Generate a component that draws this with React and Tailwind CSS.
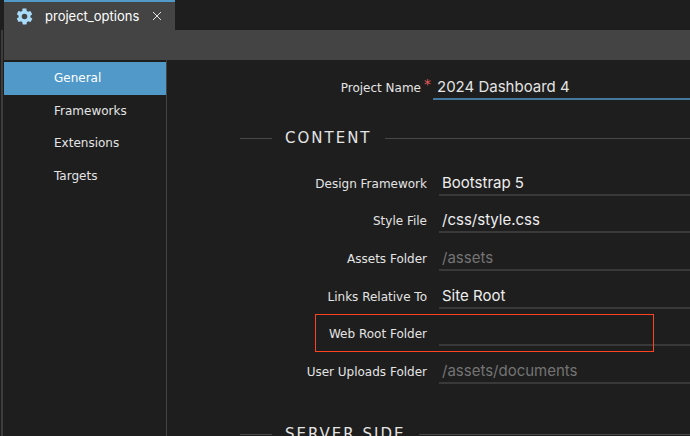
const NAV = ["General", "Frameworks", "Extensions", "Targets"];

const FIELDS = [
  { id: "framework", label: "Design Framework", value: "Bootstrap 5", kind: "select" },
  { id: "style", label: "Style File", value: "/css/style.css" },
  { id: "assets", label: "Assets Folder", placeholder: "/assets" },
  { id: "links", label: "Links Relative To", value: "Site Root", kind: "select" },
  { id: "webroot", label: "Web Root Folder", highlight: true },
  { id: "uploads", label: "User Uploads Folder", placeholder: "/assets/documents" },
];

const CONTROL =
  "block h-7 w-full appearance-none border-0 border-b-2 border-[#393939] bg-transparent px-[3px] font-['Inter',sans-serif] text-[15px] text-[#eeeeee] outline-none placeholder:text-[#747474]";

function Gear() {
  return (
    <svg viewBox="0 0 24 24" className="size-[19px] shrink-0 fill-[#a9dbfb]" aria-hidden="true">
      <path d="M19.4 13c.1-.3.1-.7.1-1s0-.7-.1-1l2.1-1.6c.2-.2.3-.4.1-.7l-2-3.4c-.1-.3-.4-.3-.6-.3l-2.500 1c-.5-.4-1.100-.7-1.700-1l-.4-2.600c0-.2-.2-.4-.5-.4h-4c-.2 0-.4.2-.5.4L9.200 5c-.6.2-1.200.6-1.700 1L5 5c-.2-.1-.5 0-.6.2l-2 3.500c-.1.200-.1.500.1.600L4.600 11c0 .3-.1.700-.1 1s0 .7.100 1l-2.100 1.600c-.2.200-.3.400-.1.700l2 3.400c.1.300.4.300.6.300l2.500-1c.5.400 1.100.700 1.700 1l.4 2.600c0 .200.200.400.5.400h4c.2 0 .4-.2.500-.4l.4-2.600c.6-.3 1.200-.6 1.700-1l2.500 1c.2.100.5 0 .6-.3l2-3.400c.1-.2.100-.5-.1-.7L19.400 13zM12 15.500a3.500 3.500 0 1 1 0-7 3.500 3.500 0 0 1 0 7z" />
    </svg>
  );
}

function SectionTitle({ children }) {
  return (
    <div className="flex items-center gap-[13px]">
      <span className="h-px w-8 bg-[#484848]" />
      <h2 className="text-[15px] leading-5 tracking-[2px] text-[#e4e4e4]">{children}</h2>
      <span className="h-px flex-1 bg-[#484848]" />
    </div>
  );
}

function Field({ field }) {
  return (
    <div className="relative flex items-end">
      <label htmlFor={field.id} className="w-[187px] pb-[2px] text-right text-[12px] leading-5">
        {field.label}
      </label>
      <div className="flex-1 pl-3">
        {field.kind === "select" ? (
          <select id={field.id} className={`${CONTROL} pt-1`}>
            <option>{field.value}</option>
          </select>
        ) : (
          <input id={field.id} className={`${CONTROL} pt-[2px]`} defaultValue={field.value} placeholder={field.placeholder} />
        )}
      </div>
      {field.highlight && (
        <div className="pointer-events-none absolute top-[5px] right-9 -bottom-[6px] left-[75px] border border-solid border-[#ff4422]" />
      )}
    </div>
  );
}

export default function App() {
  return (
    <div className="flex h-screen overflow-hidden bg-[#1e1e1e] font-['DejaVu_Sans',Verdana,sans-serif] text-[#e4e4e4]">
      <div className="w-1 shrink-0 pt-[30px]">
        <div className="ml-px h-full w-[2px] bg-[#3c3c3c]" />
      </div>
      <div className="flex min-w-0 flex-1 flex-col">
        <header>
          <div className="flex h-[30px]">
            <div className="flex w-[171px] items-center border-t-2 border-[#5099c9] bg-[#444444] pl-[11px]">
              <Gear />
              <span className="ml-[11px] font-['Inter',sans-serif] text-[13px] leading-5 text-white">project_options</span>
              <button aria-label="Close tab" className="ml-[13px]">
                <svg viewBox="0 0 10 10" className="size-[10px] stroke-[#e4e4e4]" aria-hidden="true">
                  <path d="M1 1l8 8M9 1l-8 8" />
                </svg>
              </button>
            </div>
          </div>
          <div className="h-[30px] bg-[#444444]" />
        </header>
        <div className="flex min-h-0 flex-1">
          <nav className="w-[163px] shrink-0 border-r border-[#444444] pt-[2px]">
            <ul className="grid h-[130px] grid-rows-4">
              {NAV.map((item) => (
                <li key={item} className="grid">
                  <a
                    href="#"
                    className={
                      item === "General"
                        ? "flex items-center bg-[#5099c9] pl-[50px] text-[12px] text-white"
                        : "flex items-center pl-[50px] text-[12px]"
                    }
                  >
                    {item}
                  </a>
                </li>
              ))}
            </ul>
          </nav>
          <main className="min-w-0 flex-1 pt-3 pl-[73px]">
            <div className="flex items-end">
              <label htmlFor="name" className="flex w-[193px] justify-end pr-[2px] pb-[2px] text-[12px] leading-5">
                Project Name
                <span className="-mt-1 ml-[3px] text-[14px] text-[#ec5c5c]">*</span>
              </label>
              <div className="flex-1">
                <input
                  id="name"
                  defaultValue="2024 Dashboard 4"
                  className="block h-7 w-full border-b-2 border-[#43799f] bg-transparent px-1 pt-[2px] font-['Inter',sans-serif] text-[15px] text-[#e4e4e4] outline-none"
                />
              </div>
            </div>
            <div className="pt-7">
              <SectionTitle>CONTENT</SectionTitle>
            </div>
            <div className="mt-[10px] grid h-[226px] grid-rows-6">
              {FIELDS.map((field) => (
                <Field key={field.id} field={field} />
              ))}
            </div>
            <div className="pt-10">
              <SectionTitle>SERVER SIDE</SectionTitle>
            </div>
          </main>
        </div>
      </div>
    </div>
  );
}
